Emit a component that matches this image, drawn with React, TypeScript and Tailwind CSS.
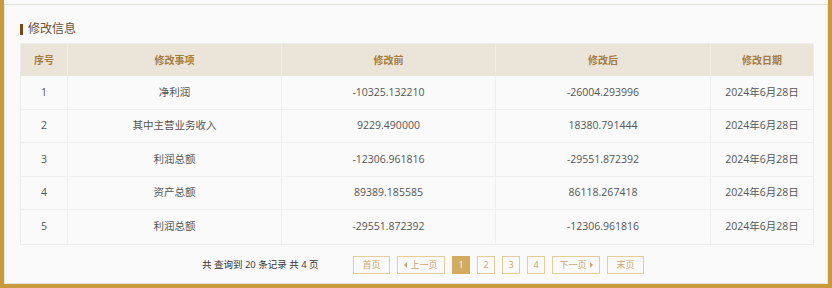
const rows = [
  { no: 1, item: '净利润', before: '-10325.132210', after: '-26004.293996', date: '2024年6月28日', h: 'h-[34px]' },
  { no: 2, item: '其中主营业务收入', before: '9229.490000', after: '18380.791444', date: '2024年6月28日', h: 'h-[33px]' },
  { no: 3, item: '利润总额', before: '-12306.961816', after: '-29551.872392', date: '2024年6月28日', h: 'h-[34px]' },
  { no: 4, item: '资产总额', before: '89389.185585', after: '86118.267418', date: '2024年6月28日', h: 'h-[33px]' },
  { no: 5, item: '利润总额', before: '-29551.872392', after: '-12306.961816', date: '2024年6月28日', h: 'h-[34px]' },
];

const cols = ['w-[47px]', 'w-[214px]', 'w-[214px]', 'w-[215px]', 'flex-1'];

function PageBtn({ children, w, active }: { children: React.ReactNode; w: string; active?: boolean }) {
  return (
    <div
      className={`${w} h-[18px] flex items-center justify-center gap-[3px] text-[9px] border ${
        active ? 'bg-[#d3ab5f] border-[#d3ab5f] text-white' : 'border-[#e5cc9a] text-[#c9a66a]'
      }`}
    >
      {children}
    </div>
  );
}

export default function App() {
  return (
    <div className="w-[832px] h-[288px] flex flex-col bg-[#fafafa] border-x-[4px] border-b-[4px] border-[#c99a3d] font-['Open_Sans','Noto_Sans_CJK_SC',sans-serif]">
      <div className="mt-[4px] flex-1 border border-[#e6e2dc] px-[15px] pt-[14px]">
        {/* Title */}
        <div className="flex items-center h-[20px] mb-[4px]">
          <div className="w-[3px] h-[11px] bg-[#7b4713] mr-[5px]" />
          <span className="text-[12px] text-[#6e5236]">修改信息</span>
        </div>

        {/* Table */}
        <div className="w-[794px] border border-[#ececec]">
          <div className="flex h-[32px] bg-[#ebe4d9] text-[10px] font-bold text-[#a47c3c]">
            {['序号', '修改事项', '修改前', '修改后', '修改日期'].map((t, i) => (
              <div
                key={t}
                className={`${cols[i]} flex items-center justify-center ${i < 4 ? 'border-r border-[#f1ece4]' : ''}`}
              >
                {t}
              </div>
            ))}
          </div>
          {rows.map((r, ri) => (
            <div
              key={r.no}
              className={`flex ${r.h} text-[10.5px] text-[#555] ${ri < rows.length - 1 ? 'border-b border-[#efefef]' : ''}`}
            >
              {[r.no, r.item, r.before, r.after, r.date].map((v, i) => (
                <div
                  key={i}
                  className={`${cols[i]} flex items-center justify-center ${i < 4 ? 'border-r border-[#efefef]' : ''}`}
                >
                  {v}
                </div>
              ))}
            </div>
          ))}
        </div>

        {/* Pagination */}
        <div className="flex items-center mt-[11px] ml-[182px] gap-[7px]">
          <span className="w-[112px] mr-[32px] text-[9.5px] text-[#333] whitespace-nowrap">共 查询到 20 条记录 共 4 页</span>
          <PageBtn w="w-[37px]">首页</PageBtn>
          <PageBtn w="w-[48px]">
            <span className="w-0 h-0 border-y-[3px] border-y-transparent border-r-[3px] border-r-[#c9a66a]" />
            上一页
          </PageBtn>
          <PageBtn w="w-[18px]" active>1</PageBtn>
          <PageBtn w="w-[18px]">2</PageBtn>
          <PageBtn w="w-[18px]">3</PageBtn>
          <PageBtn w="w-[18px]">4</PageBtn>
          <PageBtn w="w-[48px]">
            下一页
            <span className="w-0 h-0 border-y-[3px] border-y-transparent border-l-[3px] border-l-[#c9a66a]" />
          </PageBtn>
          <PageBtn w="w-[37px]">末页</PageBtn>
        </div>
      </div>
    </div>
  );
}
